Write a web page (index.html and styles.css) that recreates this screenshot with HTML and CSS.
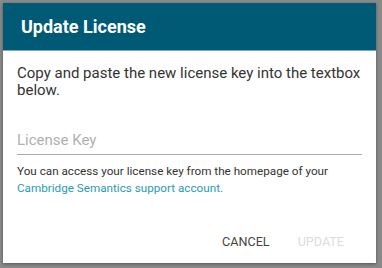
FILE: index.html
```html
<!DOCTYPE html>
<html lang="en">
<head>
    <meta charset="UTF-8">
    <title>Update License</title>
    <link rel="stylesheet" href="styles.css">
</head>
<body>
    <div class="dialog">
        <div class="dialog-header">
            <h1>Update License</h1>
        </div>
        <div class="dialog-body">
            <p class="intro">Copy and paste the new license key into the textbox below.</p>
            <div class="field">
                <input type="text" class="field-input" placeholder="License Key">
            </div>
            <p class="hint">You can access your license key from the homepage of your <a href="#">Cambridge Semantics support account.</a></p>
        </div>
        <div class="dialog-actions">
            <button class="btn">CANCEL</button>
            <button class="btn btn-disabled" disabled>UPDATE</button>
        </div>
    </div>
</body>
</html>
```

FILE: styles.css
```css
html, body {
    margin: 0;
    height: 100%;
}
body {
    font-family: Roboto, "Liberation Sans", sans-serif;
    background: #898989;
    padding: 3px;
    box-sizing: border-box;
}
.dialog {
    width: 373px;
    height: 260px;
    background: #fff;
    display: flex;
    flex-direction: column;
    box-shadow: 0 1px 3px rgba(0, 0, 0, 0.4);
}
.dialog-header {
    background: #005a75;
    height: 48px;
    padding: 0 18px;
    display: flex;
    align-items: center;
    border-bottom: 1px solid #7fa9b8;
    box-sizing: border-box;
}
.dialog-header h1 {
    margin: 0;
    color: #fff;
    font-size: 18px;
    font-weight: 700;
}
.dialog-body {
    padding: 14px 14px 0;
    flex: 1;
}
.intro {
    margin: 0;
    font-size: 15px;
    line-height: 17px;
    color: #333;
}
.field {
    margin-top: 26px;
}
.field-input {
    width: 100%;
    box-sizing: border-box;
    border: none;
    border-bottom: 1px solid #aaa;
    padding: 6px 0 5px;
    font-family: inherit;
    font-size: 15px;
    outline: none;
    background: transparent;
}
.field-input::placeholder {
    color: #b0b0b0;
}
.hint {
    margin: 8px 0 0;
    font-size: 11.7px;
    line-height: 17px;
    color: #333;
}
.hint a {
    color: #2a9cb2;
    text-decoration: none;
}
.dialog-actions {
    display: flex;
    justify-content: flex-end;
    padding: 0 25px 8px;
    gap: 14px;
}
.btn {
    background: none;
    border: none;
    font-family: inherit;
    font-size: 12.6px;
    color: #444;
    padding: 6px 7px;
    cursor: pointer;
}
.btn-disabled {
    color: #dcdcdc;
    cursor: default;
}
```
